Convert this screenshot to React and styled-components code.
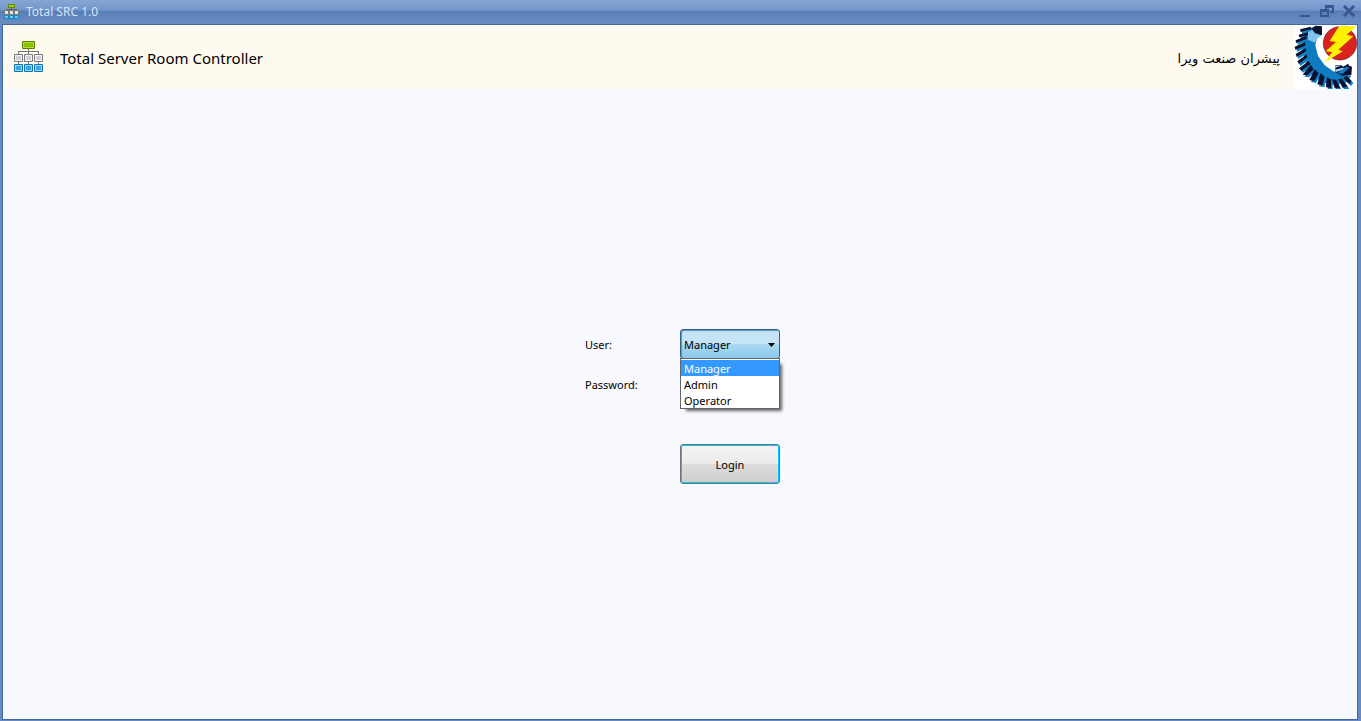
import React, { useState } from 'react'
import styled, { createGlobalStyle } from 'styled-components'

const GlobalStyle = createGlobalStyle`
    * {
        box-sizing: border-box;
    }

    body {
        margin: 0;
        font-family: 'Noto Sans', 'Open Sans', sans-serif;
        font-size: 11px;
        line-height: 16px;
        color: #000;
    }
`

const Window = styled.div`
    display: flex;
    flex-direction: column;
    min-height: 100vh;
    padding: 0 3px 1px 2px;
    background: #658bc1;
`

const TitleBar = styled.header`
    display: flex;
    align-items: center;
    gap: 6px;
    height: 24px;
    margin: 0 -3px 0 -2px;
    padding: 0 4px;
    color: #d5e4f7;
    font-size: 12px;
    background: linear-gradient(
        #86a6d5 0,
        #7496ca 10px,
        #5a7eb6 11px,
        #688cc2 24px
    );
`

const WindowTitle = styled.span`
    flex: 1;
`

const WindowButtons = styled.div`
    display: flex;
    gap: 6px;
`

const WindowButton = styled.button`
    display: flex;
    width: 16px;
    height: 16px;
    padding: 0;
    border: 0;
    background: none;
    color: #385691;
`

const Body = styled.div`
    flex: 1;
    display: flex;
    flex-direction: column;
    border: 1px solid #4468a3;
    background: #f8f9ff;
`

const Banner = styled.div`
    display: flex;
    align-items: center;
    height: 64px;
    padding-left: 10px;
    background: #fffaf0;
`

const BannerTitle = styled.h1`
    flex: 1;
    margin: 0 0 0 15px;
    padding-top: 2px;
    font-size: 15px;
    font-weight: 400;
    line-height: 20px;
`

const Company = styled.span`
    margin-right: 14px;
    padding-top: 4px;
    font-family: 'DejaVu Sans', sans-serif;
    font-size: 13px;
    line-height: 20px;
`

const Main = styled.main`
    flex: 1;
    display: flex;
    align-items: center;
    justify-content: center;
`

const Form = styled.form`
    display: grid;
    grid-template-columns: 100px 100px;
    grid-template-rows: repeat(4, 40px);
    align-items: center;
`

const Label = styled.label`
    padding: 2px 0 0 5px;
`

const Combo = styled.div`
    position: relative;
    height: 30px;
`

const Select = styled.select`
    appearance: none;
    width: 100%;
    height: 30px;
    padding: 2px 20px 0 3px;
    border: 1px solid #2c628b;
    border-radius: 3px;
    outline: 0;
    color: #000;
    font: inherit;
    background: linear-gradient(#c5e4f6 50%, #abdaf3 50%, #8bc8ec);
    box-shadow: inset 1px 1px 1px #5f93b5;
`

const Arrow = styled.svg`
    position: absolute;
    top: 14px;
    right: 5px;
    pointer-events: none;
`

const List = styled.ul`
    position: absolute;
    z-index: 1;
    top: 29px;
    left: 0;
    width: 100%;
    margin: 0;
    padding: 1px 0 0;
    border: 1px solid #646464;
    list-style: none;
    background: #fff;
    box-shadow: 4px 4px 3px -2px rgba(0, 0, 0, 0.6);
`

const Item = styled.li`
    height: 16px;
    padding-left: 3px;
    line-height: 18px;
    color: ${({ $active }) => ($active ? '#fff' : '#000')};
    background: ${({ $active }) => ($active ? '#3399ff' : 'transparent')};
    cursor: default;
`

const Password = styled.input`
    width: 100%;
    height: 30px;
    padding: 0 3px;
    border: 1px solid #abadb3;
    font: inherit;
`

const LoginButton = styled.button`
    grid-column: 2;
    grid-row: 4;
    height: 40px;
    padding: 2px 0 0;
    border: 1px solid #707070;
    border-radius: 3px;
    color: #000;
    font: inherit;
    background: linear-gradient(#f3f3f3, #ebebeb 50%, #dddddd 50%, #cdcdcd);
    box-shadow: inset 0 0 0 1px #00ccff;
`

const users = ['Manager', 'Admin', 'Operator']

const NetworkIcon = () => (
    <svg width="32" height="32" aria-hidden="true">
        <path
            d="M15 8h1v2h10v3h-1v-2h-9v2h-1v-2H6v2H5v-3h10zM5 21h1v2H5zM15 21h1v2h-1zM25 21h1v2h-1z"
            fill="#777"
        />
        <rect x="9" y="0" width="13" height="8" rx="1" fill="#5d7f0a" />
        <rect x="10" y="1" width="11" height="6" fill="#b6dc2a" />
        <rect x="11" y="2" width="9" height="4" fill="#86c000" />
        {[1, 11, 21].map((x) => (
            <g key={x}>
                <rect x={x} y="13" width="9" height="8" rx="1" fill="#7b7b7b" />
                <rect x={x + 1} y="14" width="7" height="6" fill="#f3f3f3" />
                <rect x={x + 2} y="15" width="5" height="4" fill="#cfcfd4" />
                <rect x={x} y="23" width="9" height="8" rx="1" fill="#1672ad" />
                <rect x={x + 1} y="24" width="7" height="6" fill="#9bd8f8" />
                <rect x={x + 2} y="25" width="5" height="4" fill="#35a7e8" />
            </g>
        ))}
    </svg>
)

const NetworkIconSmall = () => (
    <svg width="16" height="16" aria-hidden="true">
        <path d="M7 4h1v1h5v1H2V5h5z" fill="#666" />
        <rect x="4" y="0" width="7" height="4" fill="#5d8a0a" />
        <rect x="5" y="1" width="5" height="2" fill="#9ccf12" />
        {[0, 5, 10].map((x) => (
            <g key={x}>
                <rect x={x} y="6" width="5" height="5" fill="#7b7b7b" />
                <rect x={x + 1} y="7" width="3" height="3" fill="#e6e6ea" />
                <rect x={x} y="11" width="5" height="4" fill="#1f86c4" />
                <rect x={x + 1} y="12" width="3" height="2" fill="#6cc6f5" />
            </g>
        ))}
    </svg>
)

// dark faces of the gear teeth, from the top left round to the bottom right
const teeth = [
    'M60 88L92 80 94 88 62 96z',
    'M56 104L86 96 86 105 58 112z',
    'M47 121L80 107 80 117 48 129z',
    'M44 140L76 126 76 137 46 149z',
    'M47 162L77 144 78 154 50 171z',
    'M52 184L80 163 82 172 57 192z',
    'M57 205L86 183 92 192 64 212z',
    'M68 224L92 194 101 208 82 226z',
    'M88 240L104 208 116 220 103 243z',
    'M112 253L121 219 134 230 128 256z',
    'M138 262L140 232 153 238 153 264z',
    'M164 265L156 238 169 240 180 264z',
    'M188 263L174 238 186 236 203 260z',
    'M208 252L190 234 200 228 215 243z',
]

const CompanyLogo = () => (
    <svg width="63" height="64" viewBox="42 75 189 192" role="img" aria-label="پیشران صنعت ویرا">
        <rect x="42" y="75" width="189" height="192" fill="#fff" />
        <path
            d="M122 79L88 84 74 108 68 136 70 166 80 198 100 228 130 248 166 254 198 248 214 228 188 224 160 214 134 196 114 168 106 136 110 118z"
            fill="#0f7cc1"
        />
        <g fill="#1180c6" transform="translate(5 6)">
            {teeth.map((d) => (
                <path key={d} d={d} />
            ))}
        </g>
        <g fill="#0b1230">
            {teeth.map((d) => (
                <path key={d} d={d} />
            ))}
        </g>
        <path d="M94 86L106 77 126 79 126 106 108 104z" fill="#0b1230" />
        <path d="M84 97L97 89 104 99 124 106 112 116 105 128 84 119z" fill="#82c4ee" />
        <path d="M166 196h18l6 4 14-9 4 6 8 3-2 26-26 1-22-10z" fill="#0b1230" />
        <path d="M166 197h17l-17 6zM166 209l22-6 6 4-26 9z" fill="#a9d6f2" />
        <path d="M172 218l28-18 8 2-20 20z" fill="#1180c6" />
        <circle cx="180" cy="130" r="50" fill="#d9231c" stroke="#5d1838" strokeWidth="2" />
        <path
            d="M178 77L149 123 168 126 137 154 157 156 133 188 188 154 175 149 220 109 200 104 230 79z"
            fill="#fff200"
        />
    </svg>
)

const App = () => {
    const [user, setUser] = useState('Manager')
    const [open, setOpen] = useState(true)

    const toggle = (e) => {
        e.preventDefault()
        setOpen(!open)
    }

    const choose = (name) => {
        setUser(name)
        setOpen(false)
    }

    return (
        <React.Fragment>
            <GlobalStyle />
            <Window>
                <TitleBar>
                    <NetworkIconSmall />
                    <WindowTitle>Total SRC 1.0</WindowTitle>
                    <WindowButtons>
                        <WindowButton type="button" aria-label="Minimize">
                            <svg width="16" height="16">
                                <path d="M3 11h10v2H3z" fill="currentColor" />
                            </svg>
                        </WindowButton>
                        <WindowButton type="button" aria-label="Restore">
                            <svg width="16" height="16">
                                <path
                                    d="M6 1h9v8h-4V7h2V4H8v1H6zM1 5h9v8H1zM3 8v3h5V8z"
                                    fill="currentColor"
                                    fillRule="evenodd"
                                />
                            </svg>
                        </WindowButton>
                        <WindowButton type="button" aria-label="Close">
                            <svg width="16" height="16" fill="none" stroke="currentColor">
                                <path d="M3 2l10 10M13 2L3 12" strokeWidth="3" />
                            </svg>
                        </WindowButton>
                    </WindowButtons>
                </TitleBar>
                <Body>
                    <Banner>
                        <NetworkIcon />
                        <BannerTitle>Total Server Room Controller</BannerTitle>
                        <Company lang="fa" dir="rtl">پیشران صنعت ویرا</Company>
                        <CompanyLogo />
                    </Banner>
                    <Main>
                        <Form onSubmit={(e) => e.preventDefault()}>
                            <Label htmlFor="user">User:</Label>
                            <Combo>
                                <Select
                                    id="user"
                                    value={user}
                                    onMouseDown={toggle}
                                    onChange={(e) => setUser(e.target.value)}
                                >
                                    {users.map((name) => (
                                        <option key={name}>{name}</option>
                                    ))}
                                </Select>
                                <Arrow width="7" height="4">
                                    <path d="M0 0h7L3.5 4z" />
                                </Arrow>
                                {open && (
                                    <List role="listbox" aria-label="User">
                                        {users.map((name) => (
                                            <Item
                                                key={name}
                                                role="option"
                                                aria-selected={name === user}
                                                $active={name === user}
                                                onClick={() => choose(name)}
                                            >
                                                {name}
                                            </Item>
                                        ))}
                                    </List>
                                )}
                            </Combo>
                            <Label htmlFor="password">Password:</Label>
                            <Password id="password" type="password" />
                            <LoginButton type="submit">Login</LoginButton>
                        </Form>
                    </Main>
                </Body>
            </Window>
        </React.Fragment>
    )
}

export default App
